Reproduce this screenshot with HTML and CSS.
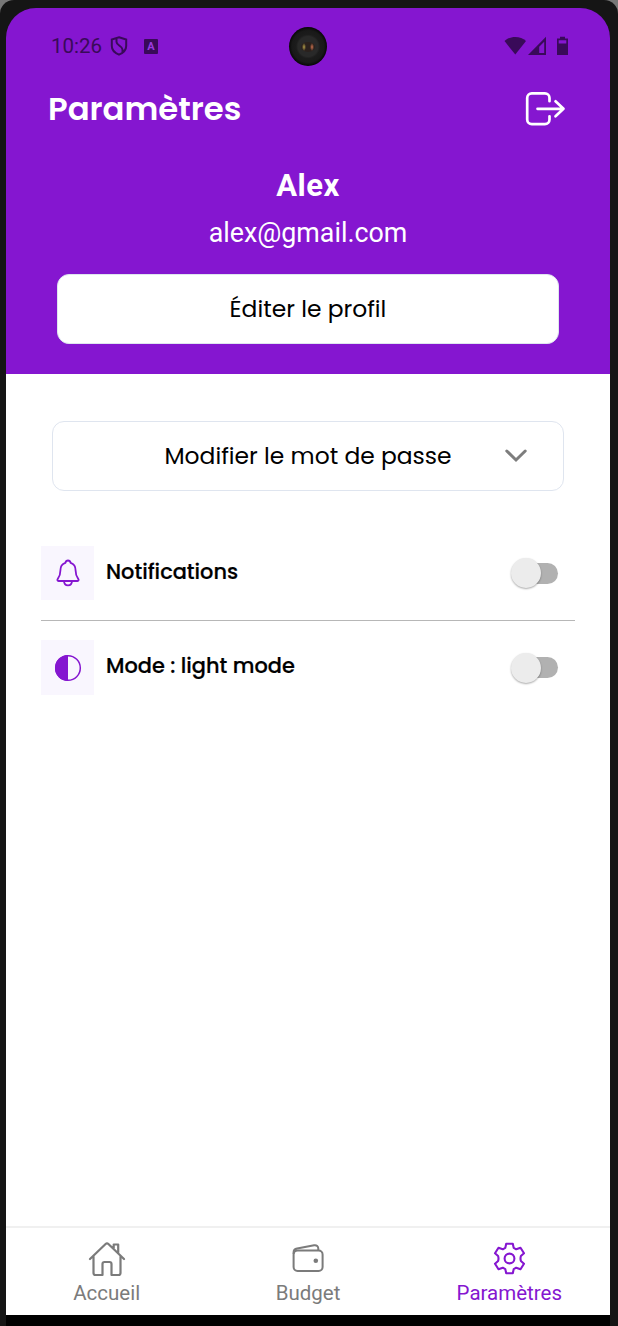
FILE: index.html
```
<!DOCTYPE html>
<html lang="fr">
<head>
<meta charset="utf-8">
<title>Paramètres</title>
<link rel="stylesheet" href="styles.css">
</head>
<body>
<div class="device">
<div class="screen">
  <header class="header">
    <div class="status">
      <span class="time">10:26</span>
      <svg class="shield" width="18" height="20" viewBox="0 0 18 20"><path d="M9 1.200 16.200 3.500V10c0 4-3.200 7-7.200 8.600C5 17 1.800 14 1.800 10V3.500Z M6.500 2.500v3.500c0 3.500 6 4 6 7.500v2.500" fill="none" stroke="currentColor" stroke-width="2"/></svg>
      <span class="badge">A</span>
      <span class="camera"><i class="lens"></i></span>
      <svg class="signals" width="66" height="20" viewBox="0 0 66 20" fill="currentColor"><path d="M.5 5C6-.3 16.500-.3 22 5L11.300 18.500Z"/><path d="M42 .8V19H24Zm-1.800 5-5 5V17h5Z" fill-rule="evenodd"/><path d="M56 .8h5v1.700h3V19H53V2.500h3Zm-1.300 3.500v3.200h7.600V4.300Z" fill-rule="evenodd"/></svg>
    </div>
    <div class="title-row">
      <h1 class="title">Paramètres</h1>
      <svg width="42" height="36" viewBox="0 0 42 36" fill="none" stroke="#fff" stroke-width="2.700" stroke-linecap="round" stroke-linejoin="round"><path d="M25.500 10.200V7a4.600 4.600 0 0 0-4.600-4.600H7.800A4.600 4.600 0 0 0 3.200 7v21.500a4.600 4.600 0 0 0 4.600 4.600h13.100a4.600 4.600 0 0 0 4.600-4.600v-3.200"/><path d="M13.500 17.800H39.500M31.500 10.300l8 7.500-8 7.500"/></svg>
    </div>
    <div class="name">Alex</div>
    <div class="email">alex@gmail.com</div>
    <button class="button edit">Éditer le profil</button>
  </header>
  <main class="content">
    <button class="button password">Modifier le mot de passe
      <svg class="chevron" width="24" height="14" viewBox="0 0 24 14" fill="none" stroke="#7d7d7d" stroke-width="3" stroke-linecap="round"><path d="m2.800 2 9.200 9 9.200-9"/></svg>
    </button>
    <div class="setting">
      <span class="tile"><svg width="28" height="30" viewBox="0 0 28 30" fill="none" stroke="#8516d0" stroke-width="1.800" stroke-linejoin="round"><path d="M4.500 23c-1.200 0-1.400-1.200-.8-2 1.500-1.900 2.700-3.300 2.700-8.500 0-4 1.600-6.600 4.900-7.600.4-1.500 1.300-2.400 2.700-2.400s2.300.9 2.700 2.400c3.300 1 4.900 3.600 4.900 7.600 0 5.200 1.200 6.600 2.700 8.500.6.800.4 2-.8 2Z"/><path d="M10 23c.2 5.800 7.800 5.800 8 0"/></svg></span>
      <span class="label">Notifications</span>
      <span class="switch"><i class="thumb"></i></span>
    </div>
    <div class="setting">
      <span class="tile"><svg width="28" height="28" viewBox="0 0 28 28"><circle cx="14" cy="14" r="12.300" fill="none" stroke="#8516d0" stroke-width="1.500"/><path d="M14 1a13 13 0 0 0 0 26Z" fill="#8516d0"/></svg></span>
      <span class="label">Mode : light mode</span>
      <span class="switch"><i class="thumb"></i></span>
    </div>
  </main>
  <nav class="nav">
    <a class="tab"><svg width="38" height="38" viewBox="0 0 38 38" fill="none" stroke="currentColor" stroke-width="2.200" stroke-linecap="round" stroke-linejoin="round"><path d="M2 19 17.600 4a2 2 0 0 1 2.800 0L36 19M5.500 16v17a2 2 0 0 0 2 2h7V24a2 2 0 0 1 2-2h5a2 2 0 0 1 2 2v11h7a2 2 0 0 0 2-2V16M25.700 8V4.500h4.500v8"/></svg><span>Accueil</span></a>
    <a class="tab"><svg width="38" height="38" viewBox="0 0 38 38" fill="none" stroke="currentColor" stroke-width="2"><rect x="4.600" y="10.500" width="29" height="20.500" rx="4"/><path d="M4.600 14v-1.700c0-2.300 1.300-3.500 3.500-3.900l17-3.100c2.700-.4 4.200 1 4.200 3.300v1.900"/><circle cx="26.800" cy="20.700" r="2.300" fill="currentColor" stroke="none"/></svg><span>Budget</span></a>
    <a class="tab active"><svg width="38" height="38" viewBox="0 0 38 38" fill="none" stroke="currentColor" stroke-width="2.100" stroke-linejoin="round"><circle cx="19.500" cy="18.500" r="4.900"/><path d="M16.200 3.700h6.600l.9 4.200 2.500 1.400 4.300-1.500 3.500 5.500-3.100 2.700q-.8 2.500 0 5l3.100 2.700-3.500 5.500-4.300-1.500-2.500 1.400-.9 4.200h-6.600l-.9-4.200-2.500-1.400-4.300 1.500L5 23.700 8.100 21q.8-2.500 0-5L5 13.300l3.500-5.500 4.300 1.500 2.500-1.400Z"/></svg><span>Paramètres</span></a>
  </nav>
</div>
</div>
</body>
</html>
```
FILE: styles.css
```
* { box-sizing: border-box; }
body { margin: 0; background: #777; font-family: Poppins, Inter, sans-serif; }
.device { width: 618px; height: 1326px; padding: 8px 8px 11px 6px; background: linear-gradient(#000, #000) 6px 1315px / 604px 11px no-repeat, #151515; border-radius: 14px 14px 0 0; }
.screen { display: flex; flex-direction: column; height: 1307px; background: linear-gradient(#151515 40px, #fff 40px); border-radius: 34px 34px 0 0; }
.header { height: 366px; flex: none; background: #8516d0; color: #fff; display: flex; flex-direction: column; align-items: center; border-radius: 30px 30px 0 0; }
.status { position: relative; width: 100%; height: 76px; padding: 0 40px 0 45px; display: flex; align-items: center; color: #390a59; flex: none; }
.time { font: 20.500px Roboto, sans-serif; width: 59px; }
.badge { margin-left: 16px; width: 14px; height: 15px; border-radius: 1px; background: #390a59; color: #9a3ae0; font: bold 11px/15px Roboto, sans-serif; text-align: center; }
.signals { margin-left: auto; }
.camera { position: absolute; left: 283px; top: 19px; width: 38px; height: 39px; border-radius: 50%; background: radial-gradient(circle, #292929 0 10px, #1c1c1c 12px, #191919 16px, #080808 19px); display: grid; place-items: center; }
.lens { width: 14px; height: 10px; background: radial-gradient(ellipse 2px 4px at 3px 5px, #b5a04a 0, transparent 100%), radial-gradient(ellipse 2px 4px at 11px 5px, #cf7350 0, transparent 100%), #2b211d; border-radius: 50%; }
.title-row { width: 100%; height: 50px; padding: 0 44px 0 42px; display: flex; align-items: center; justify-content: space-between; }
.title { margin: 0; font-size: 32.300px; font-weight: 600; line-height: 50px; }
.name { margin-top: 34px; height: 36px; font: 700 31px/35px Roboto, sans-serif; letter-spacing: .5px; }
.email { margin-top: 14px; height: 30px; font: 26.800px/30px Roboto, sans-serif; }
.button { height: 70px; padding: 0 0 2px; border: 1px solid #dfe5ef; border-radius: 12px; background: #fff; color: #000; font: 23.400px Poppins, Inter, sans-serif; position: relative; }
.edit { width: 502px; margin-top: 26px; }
.password { width: 512px; margin-left: 11px; }
.chevron { position: absolute; right: 35px; top: 27px; }
.content { flex: 1; padding: 47px 35px 0; }
.setting { display: flex; align-items: center; height: 75px; margin-top: 55px; padding-bottom: 20px; border-bottom: 1px solid #b7b7b7; }
.setting + .setting { height: 76px; margin-top: 19px; border-color: transparent; }
.tile { width: 53px; height: 54px; background: #f9f6fe; display: grid; place-items: center; }
.setting + .setting .tile { height: 55px; }
.label { margin: 0 0 4px 12px; font-size: 20.900px; font-weight: 500; -webkit-text-stroke: .2px #000; }
.switch { margin-left: auto; margin-right: 17px; width: 43px; height: 21px; border-radius: 11px; background: #b1b1b1; display: flex; align-items: center; }
.thumb { flex: none; width: 30px; height: 30px; margin-left: -4px; border-radius: 50%; background: #ececec; box-shadow: 0 1px 2px #0005; }
.nav { height: 89px; border-top: 2px solid #f0f0f0; display: grid; grid-template-columns: repeat(3, 1fr); }
.tab { display: flex; flex-direction: column; align-items: center; padding-top: 12px; color: #7b7b7b; font: 20.500px/24px Roboto, sans-serif; gap: 3px; }
.active { color: #8516d0; }
```
